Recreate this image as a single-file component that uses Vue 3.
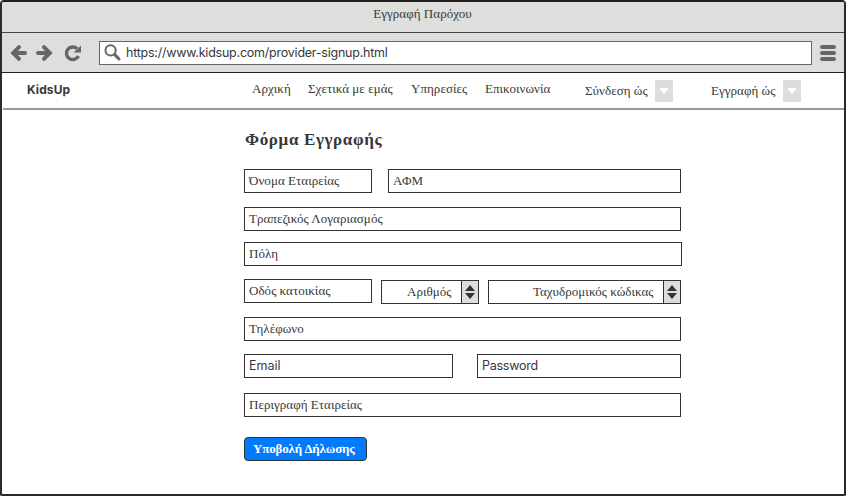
<script setup>
const links = [
  { label: 'Αρχική', cls: 'home' },
  { label: 'Σχετικά με εμάς', cls: 'about' },
  { label: 'Υπηρεσίες', cls: 'services' },
  { label: 'Επικοινωνία', cls: 'contact' },
]
const menus = [
  { label: 'Σύνδεση ώς', cls: 'login' },
  { label: 'Εγγραφή ώς', cls: 'register' },
]
const rows = [
  { cls: 'r-company', fields: [{ label: 'Όνομα Εταιρείας', cls: 'w128' }, { label: 'ΑΦΜ', cls: 'grow' }] },
  { cls: 'r-bank', fields: [{ label: 'Τραπεζικός Λογαριασμός', cls: 'grow' }] },
  { cls: 'r-city', fields: [{ label: 'Πόλη', cls: 'grow' }] },
  {
    cls: 'r-address',
    fields: [
      { label: 'Οδός κατοικίας', cls: 'w128' },
      { label: 'Αριθμός', cls: 'number', stepper: true },
      { label: 'Ταχυδρομικός κώδικας', cls: 'postal', stepper: true },
    ],
  },
  { cls: 'r-phone', fields: [{ label: 'Τηλέφωνο', cls: 'grow' }] },
  { cls: 'r-account', fields: [{ label: 'Email', cls: 'email latin' }, { label: 'Password', cls: 'password latin' }] },
  { cls: 'r-about', fields: [{ label: 'Περιγραφή Εταιρείας', cls: 'grow' }] },
]
</script>

<template>
  <div class="window">
    <header class="titlebar"><span>Εγγραφή Παρόχου</span></header>
    <div class="toolbar">
      <svg class="arrow" width="18" height="18" viewBox="0 0 18 18">
        <path d="M9 3.2 3.2 9 9 14.8M4 9H15" />
      </svg>
      <svg class="arrow forward" width="18" height="18" viewBox="0 0 18 18">
        <path d="M9 3.2 14.8 9 9 14.8M14 9H3" />
      </svg>
      <svg class="reload" width="18" height="18" viewBox="0 0 18 18">
        <path class="ring" d="M13.2 4.8A6.3 6.3 0 1 0 14.4 12" />
        <path class="head" d="M17 1.6V8.6H9.6Z" />
      </svg>
      <div class="address">
        <svg width="18" height="18" viewBox="0 0 18 18">
          <circle cx="6.6" cy="6.4" r="5.1" />
          <path d="M10.8 10.6 15 15" />
        </svg>
        <span>https://www.kidsup.com/provider-signup.html</span>
      </div>
      <div class="burger"><i /><i /><i /></div>
    </div>
    <nav class="nav">
      <strong class="brand">KidsUp</strong>
      <a v-for="l in links" :key="l.label" :class="['link', l.cls]">{{ l.label }}</a>
      <div v-for="m in menus" :key="m.label" :class="['menu', m.cls]">
        <span>{{ m.label }}</span>
        <b><svg width="10" height="6" viewBox="0 0 10 6"><path d="M0 0H10L5 6Z" /></svg></b>
      </div>
    </nav>
    <main class="form">
      <h1>Φόρμα Εγγραφής</h1>
      <div v-for="r in rows" :key="r.cls" :class="['row', r.cls]">
        <div v-for="f in r.fields" :key="f.label" :class="['field', f.cls, { stepper: f.stepper }]">
          <span>{{ f.label }}</span>
          <i v-if="f.stepper">
            <svg width="10" height="14" viewBox="0 0 10 14"><path d="M0 6 5 0 10 6ZM0 8H10L5 14Z" /></svg>
          </i>
        </div>
      </div>
      <button class="submit">Υποβολή Δήλωσης</button>
    </main>
  </div>
</template>

<style>
body {
  margin: 0;
  background: #fff;
}
</style>

<style scoped>
.window {
  box-sizing: border-box;
  width: 846px;
  height: 496px;
  border: 2px solid #2b292b;
  border-top-color: #231f20;
  border-radius: 4px 4px 2px 2px;
  background: #fff;
  overflow: hidden;
  color: #383838;
  font: 13px/16px "Liberation Serif", serif;
  letter-spacing: 0.04px;
  white-space: nowrap;
}
.titlebar {
  box-sizing: border-box;
  height: 31px;
  padding-top: 4px;
  padding-right: 1px;
  background: #dededd;
  border-bottom: 1px solid #444;
  text-align: center;
}
.toolbar {
  box-sizing: border-box;
  height: 40px;
  display: flex;
  align-items: center;
  padding: 0 8px;
  background: #dededd;
  border-bottom: 1px solid #231f20;
}
.arrow {
  fill: none;
  stroke: #666;
  stroke-width: 4;
  stroke-linecap: round;
}
.forward {
  margin-left: 7px;
}
.reload {
  margin-left: 11px;
}
.ring {
  fill: none;
  stroke: #666;
  stroke-width: 3.4;
}
.head {
  fill: #666;
}
.address {
  box-sizing: border-box;
  width: 713px;
  height: 24px;
  margin-left: 17px;
  padding-left: 4px;
  display: flex;
  align-items: center;
  gap: 4px;
  border: 1px solid #666;
  background: #fff;
  font: 12.5px/16px Inter, sans-serif;
  letter-spacing: -0.23px;
}
.address span {
  padding-top: 1px;
}
.address svg {
  fill: none;
  stroke: #666;
  stroke-width: 2;
}
.address path {
  stroke-width: 3;
  stroke-linecap: round;
}
.burger {
  width: 16px;
  margin-left: 8px;
  display: grid;
  gap: 2px;
}
.burger i {
  height: 4px;
  border-radius: 2px;
  background: #666;
}
.nav {
  box-sizing: border-box;
  height: 37px;
  margin-left: 1px;
  display: flex;
  align-items: flex-start;
  border-bottom: 2px solid #999;
}
.brand {
  box-sizing: border-box;
  width: 249px;
  padding: 9px 0 0 24px;
  font: 700 12px/16px Inter, sans-serif;
  letter-spacing: 0.1px;
}
.link {
  padding-top: 8px;
}
.home {
  width: 56px;
}
.about {
  width: 103px;
}
.services {
  width: 74px;
}
.contact {
  width: 100px;
}
.menu {
  box-sizing: border-box;
  height: 29px;
  padding-top: 7px;
  display: flex;
}
.menu span {
  padding-top: 3px;
}
.login {
  width: 126px;
}
.login span {
  width: 70px;
}
.register span {
  width: 72px;
}
.menu b {
  width: 18px;
  height: 22px;
  display: grid;
  place-items: center;
  background: #ddd;
}
.menu path {
  fill: #fff;
}
.form {
  width: 438px;
  margin-left: 242px;
  padding-top: 19px;
}
h1 {
  margin: 0 0 18px 1px;
  font-size: 17px;
  line-height: 22px;
  letter-spacing: 0.64px;
}
.row {
  width: 437px;
  height: 24px;
  display: flex;
}
.r-company {
  gap: 16px;
  margin-bottom: 14px;
}
.r-bank {
  margin-bottom: 11px;
}
.r-city {
  width: 438px;
  margin-bottom: 13px;
}
.r-address {
  gap: 9px;
  margin-bottom: 14px;
}
.r-phone {
  margin-bottom: 13px;
}
.r-account {
  gap: 24px;
  margin-bottom: 15px;
}
.r-about {
  margin-bottom: 20px;
}
.field {
  box-sizing: border-box;
  height: 24px;
  padding: 3px 0 0 4px;
  border: 1px solid #333;
  background: #fff;
}
.grow {
  flex: 1;
}
.w128 {
  width: 128px;
}
.email {
  width: 209px;
}
.password {
  width: 204px;
}
.latin {
  font: 12.5px/16px Inter, sans-serif;
  letter-spacing: -0.25px;
}
.email span {
  letter-spacing: 0;
}
.stepper {
  display: flex;
  justify-content: flex-end;
  margin-top: 1px;
  padding: 0;
}
.stepper span {
  padding: 3px 9.5px 0 0;
}
.stepper i {
  width: 16px;
  display: grid;
  place-items: center;
  border-left: 1px solid #333;
  background: #ddd;
}
.stepper path {
  fill: #333;
}
.number {
  width: 98px;
}
.postal {
  width: 193px;
}
.submit {
  display: block;
  box-sizing: border-box;
  width: 123px;
  height: 24px;
  padding: 0 0 0 8px;
  border: 1px solid #333;
  border-radius: 4px;
  background: #007bff;
  color: #fff;
  font: 700 13px/20px "Liberation Serif", serif;
  letter-spacing: -0.16px;
  text-align: left;
}
</style>
